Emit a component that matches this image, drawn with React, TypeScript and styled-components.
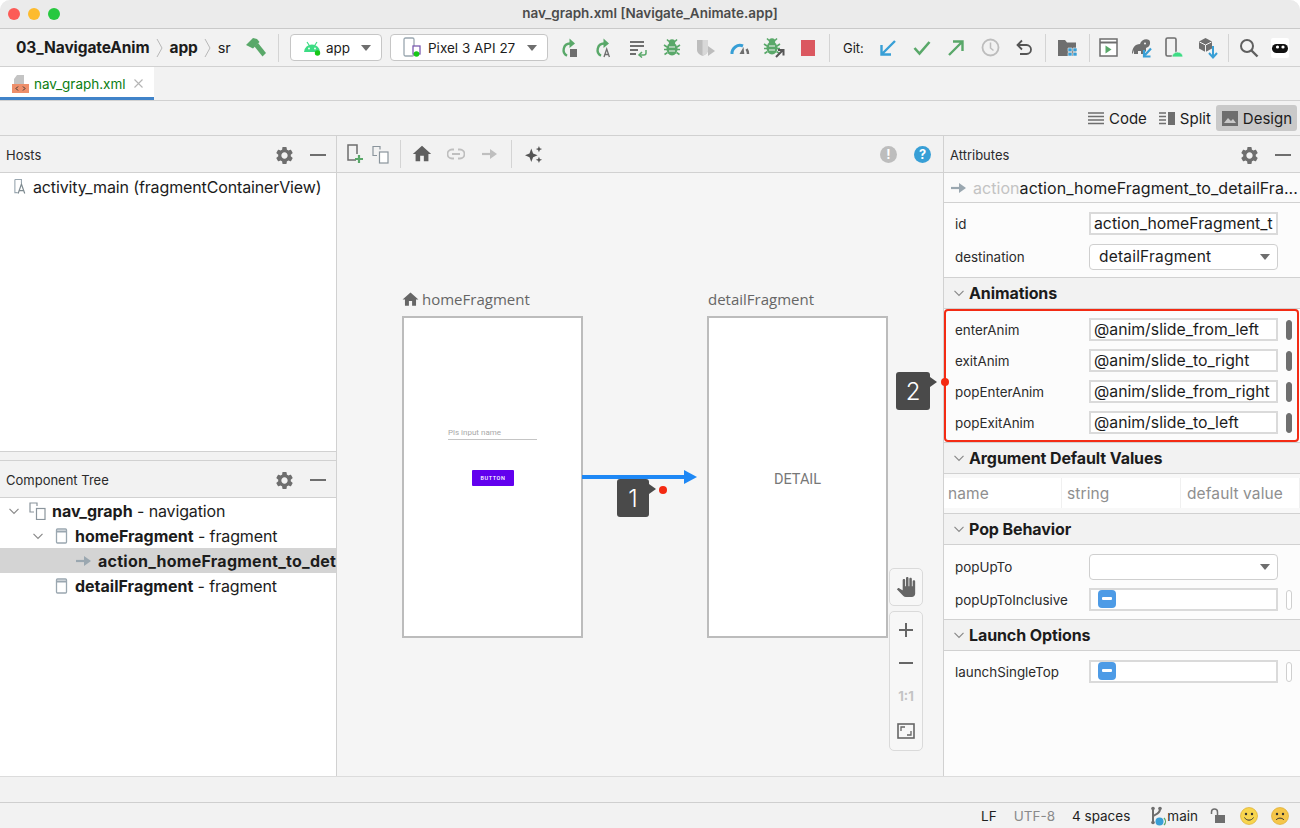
import React from 'react'
import styled, { createGlobalStyle } from 'styled-components'
import { MdSettings, MdHome, MdPanTool } from 'react-icons/md'

const GlobalStyle = createGlobalStyle`
  html, body { margin: 0; padding: 0; background: #fff; }
  body { font-family: Inter, "Liberation Sans", sans-serif; color: #1c1c1c; }
  * { box-sizing: border-box; }
`

const Window = styled.div`
  position: relative;
  width: 1300px;
  height: 828px;
  display: flex;
  flex-direction: column;
  overflow: hidden;
  background: #f2f2f2;
  border-radius: 10px 10px 0 0;
`

const TitleBar = styled.div`
  position: relative;
  height: 29px;
  flex: none;
  display: flex;
  align-items: center;
  justify-content: center;
  padding-bottom: 2px;
  background: #ebebeb;
  border-bottom: 1px solid #c9c9c9;
  font-size: 13.5px;
  font-weight: 600;
  color: #4b4b4b;
`

const Lights = styled.div`
  position: absolute;
  left: 8px;
  top: 8px;
  display: flex;
  gap: 8px;
`

const Light = styled.span<{ $c: string }>`
  width: 12px;
  height: 12px;
  border-radius: 50%;
  background: ${p => p.$c};
`

const Toolbar = styled.div`
  height: 38px;
  flex: none;
  display: flex;
  align-items: center;
  padding-left: 16px;
  background: #f2f2f2;
  border-bottom: 1px solid #d1d1d1;
`

const Crumbs = styled.div`
  width: 224px;
  display: flex;
  align-items: center;
  font-size: 15.5px;
  font-weight: 700;
  letter-spacing: -0.1px;
`

const CrumbGap = styled.svg`
  margin: 0 7px 0 6px;
  flex: none;
`

const CrumbLast = styled.span`
  font-weight: 400;
  font-size: 14.5px;
`

const Slot = styled.div<{ $w?: number; $ml?: number }>`
  width: ${p => p.$w || 34}px;
  margin-left: ${p => p.$ml || 0}px;
  height: 24px;
  flex: none;
  display: flex;
  align-items: center;
  justify-content: center;
`

const Sep = styled.div<{ $ml: number; $mr?: number }>`
  width: 1px;
  height: 28px;
  flex: none;
  margin-left: ${p => p.$ml}px;
  margin-right: ${p => p.$mr || 0}px;
  background: #d4d4d4;
`

const RunPicker = styled.div<{ $w: number; $ml?: number }>`
  width: ${p => p.$w}px;
  height: 27px;
  flex: none;
  margin-left: ${p => p.$ml || 0}px;
  display: flex;
  align-items: center;
  padding: 0 10px 0 12px;
  gap: 5px;
  background: #fff;
  border: 1px solid #c6c6c6;
  border-radius: 4px;
  font-size: 13.5px;
  white-space: nowrap;
`

const Caret = styled.span`
  margin-left: auto;
  width: 0;
  height: 0;
  border-left: 5.5px solid transparent;
  border-right: 5.5px solid transparent;
  border-top: 6px solid #6e6e6e;
`

const GitLabel = styled.span`
  width: 22px;
  margin-left: 13px;
  flex: none;
  font-size: 13px;
`

const TabBar = styled.div`
  height: 34px;
  flex: none;
  display: flex;
  background: #f2f2f2;
  border-bottom: 1px solid #d1d1d1;
`

const Tab = styled.div`
  width: 154px;
  height: 33px;
  display: flex;
  align-items: center;
  padding: 3px 0 0 12px;
  gap: 5px;
  background: #fff;
  border-bottom: 3px solid #4083c9;
  font-size: 13.5px;
  color: #0b7e12;
`

const TabClose = styled.svg`
  margin-left: 2px;
`

const ViewBar = styled.div`
  height: 35px;
  flex: none;
  display: flex;
  align-items: center;
  justify-content: flex-end;
  padding-right: 3px;
  background: #f2f2f2;
  border-bottom: 1px solid #d1d1d1;
`

const ViewMode = styled.div<{ $active?: boolean }>`
  height: 26px;
  display: flex;
  align-items: center;
  gap: 5px;
  padding: 0 5px 0 6px;
  margin-left: ${p => (p.$active ? 0 : 1)}px;
  border-radius: 3px;
  background: ${p => (p.$active ? '#c9c9c9' : 'transparent')};
  font-size: 15px;
`

const Main = styled.div`
  height: 641px;
  flex: none;
  display: flex;
  border-bottom: 1px solid #dcdcdc;
`

const LeftCol = styled.div`
  width: 337px;
  flex: none;
  display: flex;
  flex-direction: column;
  border-right: 1px solid #d1d1d1;
`

const PanelHead = styled.div<{ $pr?: number }>`
  height: 37px;
  flex: none;
  display: flex;
  align-items: center;
  padding: 2px ${p => p.$pr || 9}px 0 6px;
  background: #f2f2f2;
  border-bottom: 1px solid #d1d1d1;
  font-size: 13px;
  color: #2b2b2b;
`

const HeadTools = styled.div`
  margin-left: auto;
  display: flex;
  align-items: center;
  gap: 15px;
  color: #6e6e6e;
`

const Minus = styled.span`
  width: 16px;
  height: 2px;
  background: #6e6e6e;
`

const HostList = styled.div`
  height: 279px;
  flex: none;
  background: #fff;
  border-bottom: 1px solid #d1d1d1;
  padding-top: 1px;
`

const Splitter = styled.div`
  height: 9px;
  flex: none;
  background: #f2f2f2;
  border-bottom: 1px solid #d1d1d1;
`

const Tree = styled.div`
  flex: 1;
  background: #fff;
  overflow: hidden;
`

const TreeRow = styled.div<{ $indent: number; $selected?: boolean }>`
  height: 25px;
  display: flex;
  align-items: center;
  gap: 5px;
  padding-left: ${p => p.$indent}px;
  background: ${p => (p.$selected ? '#d4d4d4' : 'transparent')};
  font-size: 16px;
  letter-spacing: -0.13px;
  white-space: nowrap;
`

const TreeToggle = styled.span`
  display: flex;
  margin-right: 4px;
`

const ArrowSlot = styled.span`
  width: 17px;
  flex: none;
  display: flex;
`

const Bold = styled.b`
  font-weight: 700;
  letter-spacing: 0;
`

const ActionName = styled(Bold)`
  letter-spacing: 0.25px;
`

const Canvas = styled.div`
  width: 607px;
  flex: none;
  display: flex;
  flex-direction: column;
  background: #f5f5f5;
  border-right: 1px solid #d1d1d1;
`

const CanvasTools = styled.div`
  height: 37px;
  flex: none;
  display: flex;
  align-items: center;
  padding: 0 12px 0 9px;
  background: #f2f2f2;
  border-bottom: 1px solid #d1d1d1;
`

const ToolRight = styled.div`
  margin-left: auto;
  display: flex;
  gap: 17px;
`

const Graph = styled.div`
  position: relative;
  flex: 1;
`

const NodeLabel = styled.div<{ $x: number }>`
  position: absolute;
  left: ${p => p.$x}px;
  top: 116px;
  display: flex;
  align-items: center;
  gap: 2px;
  font-size: 15px;
  font-family: "Open Sans", Inter, sans-serif;
  color: #666;
`

const Node = styled.div<{ $x: number }>`
  position: absolute;
  left: ${p => p.$x}px;
  top: 143px;
  width: 181px;
  height: 322px;
  background: #fff;
  border: 2px solid #bcbcbc;
`

const NameField = styled.div`
  position: absolute;
  left: 44px;
  top: 110px;
  width: 89px;
  height: 12px;
  border-bottom: 1px solid #c5c5c5;
  font-size: 8px;
  line-height: 10px;
  color: #a8a8a8;
  font-family: Roboto, sans-serif;
`

const FakeButton = styled.div`
  position: absolute;
  left: 68px;
  top: 152px;
  width: 42px;
  height: 16px;
  display: flex;
  align-items: center;
  justify-content: center;
  background: #6200ee;
  border-radius: 1px;
  font-size: 5.5px;
  font-weight: 500;
  letter-spacing: 0.6px;
  color: #fff;
  font-family: Roboto, sans-serif;
`

const DetailText = styled.div`
  position: absolute;
  left: 0;
  right: 0;
  top: 153px;
  text-align: center;
  font-size: 14.5px;
  color: #777;
  font-family: Roboto, sans-serif;
`

const Edge = styled.svg`
  position: absolute;
  left: 245px;
  top: 296px;
`

const ToolCard = styled.div<{ $top: number; $h: number }>`
  position: absolute;
  left: 552px;
  top: ${p => p.$top}px;
  width: 34px;
  height: ${p => p.$h}px;
  display: flex;
  flex-direction: column;
  align-items: center;
  justify-content: space-around;
  padding: 2px 0;
  background: #f7f7f7;
  border: 1px solid #dadada;
  border-radius: 5px;
  color: #666;
`

const OneToOne = styled.span`
  font-size: 13px;
  font-weight: 700;
  color: #c4c4c4;
`

const Attrs = styled.div`
  flex: 1;
  display: flex;
  flex-direction: column;
  background: #fcfcfc;
  min-width: 0;
`

const ActionRow = styled.div`
  height: 30px;
  flex: none;
  display: flex;
  align-items: center;
  padding: 1px 0 0 7px;
  background: #fafafa;
  border-bottom: 1px solid #d1d1d1;
  font-size: 16px;
  letter-spacing: 0.05px;
  white-space: nowrap;
`

const ActionGhost = styled.span`
  margin-left: 6px;
  color: #c3c3c3;
`

const SectionHead = styled.div`
  height: 32px;
  flex: none;
  display: flex;
  align-items: center;
  gap: 4px;
  padding-left: 9px;
  background: #f2f2f2;
  border-top: 1px solid #d1d1d1;
  border-bottom: 1px solid #d1d1d1;
  font-size: 16px;
  font-weight: 700;
  letter-spacing: -0.1px;
`

const SectionBody = styled.div<{ $top: number; $bottom: number }>`
  flex: none;
  padding: ${p => p.$top}px 0 ${p => p.$bottom}px;
`

const AttrRow = styled.div<{ $h: number }>`
  height: ${p => p.$h}px;
  display: flex;
  align-items: center;
  padding-left: 11px;
`

const AttrLabel = styled.span`
  width: 134px;
  flex: none;
  font-size: 13.4px;
  color: #2b2b2b;
`

const Field = styled.div`
  width: 189px;
  height: 23px;
  flex: none;
  display: flex;
  align-items: center;
  padding-left: 3px;
  background: #fff;
  border: 2px solid #dadada;
  font-size: 15.8px;
  white-space: nowrap;
  overflow: hidden;
`

const Check = styled.span`
  position: relative;
  width: 18px;
  height: 18px;
  margin: 0 0 2px 4px;
  border-radius: 4px;
  background: #4d9be6;
  &::after {
    content: '';
    position: absolute;
    left: 4px;
    top: 7px;
    width: 10px;
    height: 3px;
    border-radius: 1px;
    background: #fff;
  }
`

const Select = styled.div`
  width: 189px;
  height: 26px;
  flex: none;
  display: flex;
  align-items: center;
  padding: 0 7px 0 9px;
  background: #fff;
  border: 1px solid #cfcfcf;
  border-radius: 4px;
  font-size: 15.5px;
  letter-spacing: 0.2px;
`

const Grip = styled.span<{ $empty?: boolean }>`
  width: 6px;
  height: 20px;
  margin-left: 8px;
  flex: none;
  border-radius: 3px;
  background: ${p => (p.$empty ? '#fff' : '#6e6e6e')};
  border: 1px solid ${p => (p.$empty ? '#cfcfcf' : '#6e6e6e')};
`

const ArgTable = styled.div`
  height: 39px;
  flex: none;
  display: grid;
  grid-template-columns: 118px 119px 1fr;
  padding: 4px 0 5px;
  background: #f8f8f8;
`

const ArgCell = styled.div`
  display: flex;
  align-items: center;
  padding-left: 4px;
  background: #fff;
  border-right: 1px solid #f0f0f0;
  font-size: 15.5px;
  letter-spacing: 0.1px;
  color: #8f8f8f;
  &:nth-child(n + 2) { padding-left: 5px; }
  &:nth-child(3) { padding-left: 6px; }
`

const BottomGap = styled.div`
  height: 26px;
  flex: none;
  background: #f2f2f2;
  border-bottom: 1px solid #cfcfcf;
`

const StatusBar = styled.div`
  flex: 1;
  display: flex;
  align-items: center;
  padding-right: 11px;
  background: #f2f2f2;
  font-size: 13.5px;
`

const StatusItem = styled.span<{ $ml: number; $muted?: boolean }>`
  margin-left: ${p => p.$ml}px;
  color: ${p => (p.$muted ? '#8a8a8a' : '#1f1f1f')};
  display: flex;
  align-items: center;
`

const StatusStart = styled.span`
  margin-left: auto;
`

const Badge = styled.div<{ $x: number; $y: number; $w: number; $h: number }>`
  position: absolute;
  left: ${p => p.$x}px;
  top: ${p => p.$y}px;
  width: ${p => p.$w}px;
  height: ${p => p.$h}px;
  display: flex;
  align-items: center;
  justify-content: center;
  background: #4a4a4a;
  border-radius: 3px;
  font-size: 24px;
  font-weight: 300;
  color: #fff;
  &::after {
    content: '';
    position: absolute;
    left: 100%;
    top: 5px;
    border-left: 7px solid #4a4a4a;
    border-top: 5.5px solid transparent;
    border-bottom: 5.5px solid transparent;
  }
`

const RedDot = styled.span<{ $x: number; $y: number }>`
  position: absolute;
  left: ${p => p.$x}px;
  top: ${p => p.$y}px;
  width: 8px;
  height: 8px;
  border-radius: 50%;
  background: #f42a12;
`

const RedFrame = styled.div`
  position: absolute;
  left: 944px;
  top: 309px;
  width: 355px;
  height: 133px;
  border: 2px solid #f32b14;
  border-radius: 4px;
`

/* icons */
const G = '#59a869'
const GR = '#6e6e6e'
const BL = '#389fd6'

const Chevron = ({ c = '#8a8a8a' }: { c?: string }) => (
  <svg width="12" height="12" viewBox="0 0 12 12"><path d="M1.5 3.8 6 8.3l4.5-4.500" fill="none" stroke={c} strokeWidth="1.2" /></svg>
)

const Gear = () => <MdSettings size={21} color="#6e6e6e" />

const Hammer = () => (
  <svg width="22" height="22" viewBox="0 0 22 22">
    <path d="M1 8 8 1l4 1 2.500 3-6.500 6.500z" fill={G} />
    <path d="M9.500 9.500 13 6l8 10-3.500 3.500z" fill={G} />
  </svg>
)

const Droid = () => (
  <svg width="18" height="16" viewBox="0 0 18 16">
    <path d="M1 12a8 7.500 0 0 1 16 0z" fill="#3ddc84" />
    <path d="m4 2 2 3M14 2l-2 3" stroke="#3ddc84" strokeWidth="1.200" />
    <circle cx="6" cy="8.500" r=".9" fill="#fff" />
    <circle cx="12" cy="8.500" r=".9" fill="#fff" />
    <circle cx="14.500" cy="13" r="2.700" fill="#17c717" />
  </svg>
)

const Phone = () => (
  <svg width="20" height="22" viewBox="0 0 20 22">
    <rect x="1" y="1" width="10" height="18" rx="1.500" fill="#fff" stroke="#9aa7b0" strokeWidth="1.300" />
    <rect x="10" y="9" width="7" height="8" fill="#fff" stroke="#7b5bb0" strokeWidth="1.300" />
    <circle cx="13.500" cy="17" r="2.800" fill="#17c717" />
  </svg>
)

const Rerun = ({ letter }: { letter?: boolean }) => (
  <svg width="20" height="22" viewBox="0 0 20 22">
    <path d="M10 6.500a6.500 6.500 0 0 0-3 12.200" fill="none" stroke={G} strokeWidth="2.400" />
    <path d="M9.500 1.500 15 6.500l-5.500 4.500z" fill={G} />
    {letter
      ? <path d="m10 20 2.700-8 2.700 8m-4.500-2.500h3.600" fill="none" stroke={GR} strokeWidth="1.300" />
      : <rect x="10" y="12" width="7" height="8" fill={GR} />}
  </svg>
)

const SyncLines = () => (
  <svg width="20" height="20" viewBox="0 0 20 20">
    <path d="M2 4h14M2 8h14M2 12h8M2 16h6" stroke={GR} strokeWidth="2" />
    <path d="M18 12v3a2 2 0 0 1-2 2h-4" fill="none" stroke={G} strokeWidth="1.500" />
    <path d="m14 14-3 3 3 2.500" fill="none" stroke={G} strokeWidth="1.500" />
  </svg>
)

const BugBody = ({ c }: { c: string }) => (
  <>
    <ellipse cx="9" cy="11" rx="5.500" ry="6.500" fill={c} />
    <circle cx="9" cy="4.500" r="3.200" fill={c} />
    <path d="M1 7l3 2M17 7l-3 2M1 11.500h3M17 11.500h-3M1.500 16.500l3-2M16.500 16.500l-3-2M4 1.500l2 2M14 1.500l-2 2" stroke={c} strokeWidth="1.600" />
    <path d="M6 9h6M6 13h6" stroke="#f2f2f2" strokeWidth="1.100" />
  </>
)

const Bug = () => <svg width="18" height="19" viewBox="0 0 18 19"><BugBody c={G} /></svg>

const AttachBug = () => (
  <svg width="22" height="22" viewBox="0 0 22 22">
    <BugBody c={G} />
    <path d="m13 20 7-7m-5 0h5.500v5.500" fill="none" stroke="#555" strokeWidth="2" />
  </svg>
)

const Shield = () => (
  <svg width="22" height="22" viewBox="0 0 22 22">
    <path d="M2 3h11v10c0 3-3 5-5.500 6C5 18 2 16 2 13z" fill="#bdbdbd" />
    <path d="M7.500 3H13v10c0 3-3 5-5.500 6z" fill="#d8d8d8" />
    <path d="m13 9 7 5-7 5z" fill="#bdbdbd" />
  </svg>
)

const Gauge = () => (
  <svg width="20" height="18" viewBox="0 0 20 18">
    <path d="M2 15a8 8 0 0 1 11-8" fill="none" stroke={BL} strokeWidth="3" />
    <path d="M18 15a8 8 0 0 0-1.500-5" fill="none" stroke={GR} strokeWidth="2.500" />
    <path d="m9.500 15 4-7 .8 7z" fill={GR} />
  </svg>
)

const Stop = () => <svg width="14" height="16" viewBox="0 0 14 16"><rect width="14" height="16" fill="#db5860" /></svg>

const ArrowIcon = ({ c, up }: { c: string; up?: boolean }) => (
  <svg width="18" height="18" viewBox="0 0 18 18">
    {up
      ? <path d="M2 16 15 3M6 2.500h9.500V12" fill="none" stroke={c} strokeWidth="2.400" />
      : <path d="M16 2 3 15M2.500 6v9.500H12" fill="none" stroke={c} strokeWidth="2.400" />}
  </svg>
)

const CheckMark = () => (
  <svg width="18" height="16" viewBox="0 0 18 16"><path d="m1.500 8 5 5.500L16.500 2" fill="none" stroke={G} strokeWidth="2.600" /></svg>
)

const Clock = () => (
  <svg width="19" height="19" viewBox="0 0 19 19">
    <circle cx="9.500" cy="9.500" r="8" fill="none" stroke="#bdbdbd" strokeWidth="1.800" />
    <path d="M9.500 4.500v5.500l3 2.500" fill="none" stroke="#bdbdbd" strokeWidth="1.500" />
  </svg>
)

const Undo = () => (
  <svg width="18" height="18" viewBox="0 0 18 18">
    <path d="M3 6h8.500a4.500 4.500 0 0 1 0 9H5" fill="none" stroke="#555" strokeWidth="1.800" />
    <path d="M7 1.500 2.500 6 7 10.500" fill="none" stroke="#555" strokeWidth="1.800" />
  </svg>
)

const FolderGrid = () => (
  <svg width="20" height="18" viewBox="0 0 20 18">
    <path d="M0 1h7l2 2.500h9V17H0z" fill={GR} />
    <path d="M10 9h4v3.500h-4zM15 9h4v3.500h-4zM15 13.500h4V17h-4zM10 13.500h4V17h-4z" fill={BL} stroke="#f2f2f2" strokeWidth=".6" />
  </svg>
)

const TermPlay = () => (
  <svg width="19" height="19" viewBox="0 0 19 19">
    <rect x="1" y="1" width="17" height="17" fill="#fff" stroke={GR} strokeWidth="1.500" />
    <path d="M1 4.500h17" stroke={GR} strokeWidth="2" />
    <path d="m6.500 7.500 6 4-6 4z" fill={G} />
  </svg>
)

const Elephant = () => (
  <svg width="22" height="22" viewBox="0 0 22 22">
    <path d="M1 17c0-6 3-10 8-10 1-4 6-6 9-4 2 2 1 6-1 7l-2 1v3l-3 3h-2v-3H7v3H3v-4l-1 3z" fill={GR} />
    <circle cx="14" cy="6.500" r="1" fill="#f2f2f2" />
    <path d="M20 11.500 14 18m-1-5v6.500h6.500" fill="none" stroke={BL} strokeWidth="2.200" />
  </svg>
)

const PhoneDroid = () => (
  <svg width="20" height="22" viewBox="0 0 20 22">
    <rect x="1" y="1" width="10" height="18" rx="1.500" fill="none" stroke={GR} strokeWidth="1.600" />
    <path d="M7 20a5.500 5 0 0 1 11 0z" fill="#3ddc84" stroke="#f2f2f2" strokeWidth=".8" />
  </svg>
)

const PackageDown = () => (
  <svg width="20" height="22" viewBox="0 0 20 22">
    <path d="m7.500 1 6.500 3.500v7L7.500 15 1 11.500v-7z" fill={GR} />
    <path d="m1.500 5 6 3 6-3M7.500 8v7" fill="none" stroke="#f2f2f2" strokeWidth="1" />
    <path d="M15 9v11m-4-4 4 4.500 4-4.500" fill="none" stroke={BL} strokeWidth="2" />
  </svg>
)

const Search = () => (
  <svg width="20" height="20" viewBox="0 0 20 20">
    <circle cx="8" cy="8" r="6" fill="none" stroke="#5f5f5f" strokeWidth="2" />
    <path d="m12.500 12.500 6 6" stroke="#5f5f5f" strokeWidth="2.400" />
  </svg>
)

const Ninja = () => (
  <svg width="18" height="20" viewBox="0 0 18 20">
    <rect width="18" height="20" rx="2" fill="#fff" />
    <rect x="1" y="6" width="16" height="9" rx="4.500" fill="#111" />
    <circle cx="6.500" cy="9" r="1.600" fill="#fff" />
    <circle cx="12" cy="9" r="1.600" fill="#fff" />
  </svg>
)

const XmlFile = () => (
  <svg width="17" height="20" viewBox="0 0 17 20">
    <path d="M5 1h7v10H2V5z" fill="#c4c4c4" />
    <rect x="0" y="10" width="18" height="9" fill="#ee8f6b" />
    <path d="M6 12.500 4 14.500l2 2M11 12.500l2 2-2 2" fill="none" stroke="#333" strokeWidth="1" />
  </svg>
)

const Cross = () => (
  <TabClose width="11" height="11" viewBox="0 0 11 11">
    <path d="m1.500 1.500 8 8m0-8-8 8" stroke="#b5b5b5" strokeWidth="1.100" />
  </TabClose>
)

const CodeLines = () => (
  <svg width="16" height="15" viewBox="0 0 16 15"><path d="M0 2h16M0 5.500h16M0 9h16M0 12.500h16" stroke="#6e6e6e" strokeWidth="1.500" /></svg>
)

const SplitLines = () => (
  <svg width="16" height="15" viewBox="0 0 16 15">
    <path d="M0 2h7M0 5.500h7M0 9h7M0 12.500h7" stroke="#6e6e6e" strokeWidth="1.500" />
    <rect x="9" y="1" width="7" height="13" fill="#6e6e6e" />
  </svg>
)

const ImageIcon = () => (
  <svg width="16" height="15" viewBox="0 0 16 15">
    <rect width="16" height="15" fill="#6e6e6e" />
    <path d="m2 12 4-5 3 3 2-2 3 4z" fill="#c9c9c9" />
  </svg>
)

const AddDest = () => (
  <svg width="18" height="20" viewBox="0 0 18 20">
    <path d="M10 16H2V1h9v9" fill="none" stroke="#6e6e6e" strokeWidth="1.500" />
    <path d="M13 11v8M9 15h8" stroke={G} strokeWidth="2.200" />
  </svg>
)

const Copies = ({ s = 18 }: { s?: number }) => (
  <svg width={s} height={s} viewBox="0 0 18 18">
    <path d="M5 10H1V1h7v3" fill="none" stroke="#8a949c" strokeWidth="1.200" />
    <rect x="7.500" y="6.500" width="8.500" height="11" fill="#fff" stroke="#8a949c" strokeWidth="1.200" />
  </svg>
)

const LinkIcon = () => (
  <svg width="18" height="12" viewBox="0 0 18 12">
    <path d="M7 1.500H5a4.500 4.500 0 0 0 0 9h2M11 1.500h2a4.500 4.500 0 0 1 0 9h-2M5 6h8" fill="none" stroke="#bfbfbf" strokeWidth="1.800" />
  </svg>
)

const SmallArrow = ({ c = '#bfbfbf', w = 16 }: { c?: string; w?: number }) => (
  <svg width={w} height="12" viewBox="0 0 16 12"><path d="M0 6h9" stroke={c} strokeWidth="2.200" /><path d="m8 1 7 5-7 5z" fill={c} /></svg>
)

const Sparkles = () => (
  <svg width="18" height="18" viewBox="0 0 20 20" fill="#555">
    <path d="M7 4 9 9.500l5 2-5 2L7 19l-2-5.500-5-2 5-2zM15.500 1l1 2.500L19 4.500l-2.500 1-1 2.500-1-2.500-2.500-1 2.500-1zM15.500 13l1 2.500 2.500 1-2.500 1-1 2.500-1-2.500-2.500-1 2.500-1z" />
  </svg>
)

const RoundMark = ({ c, t }: { c: string; t: string }) => (
  <svg width="17" height="17" viewBox="0 0 16 16">
    <circle cx="8" cy="8" r="8" fill={c} />
    <text x="8" y="12.500" textAnchor="middle" fontSize="12" fontWeight="700" fill="#fff" fontFamily="Inter, sans-serif">{t}</text>
  </svg>
)

const HostIcon = () => (
  <svg width="15" height="17" viewBox="0 0 16 17">
    <path d="M2 1h7v4M2 1v14h3" fill="none" stroke="#9aa7b0" strokeWidth="1.200" />
    <path d="m5.500 16 3.500-10 3.500 10M7 13h5" fill="none" stroke="#7f8b91" strokeWidth="1.300" />
  </svg>
)

const FragIcon = () => (
  <svg width="17" height="16" viewBox="0 0 17 16">
    <rect x="3.500" y="1" width="10" height="14" rx="1" fill="#fff" stroke="#9aa7b0" strokeWidth="1.300" />
    <path d="M3.500 3.500h10" stroke="#9aa7b0" strokeWidth="2" />
  </svg>
)

const FitIcon = () => (
  <svg width="18" height="16" viewBox="0 0 18 16">
    <rect x="1" y="1" width="16" height="14" fill="none" stroke="#666" strokeWidth="1.600" />
    <path d="M4 8V4h4M14 8v4h-4" fill="none" stroke="#666" strokeWidth="1.300" />
  </svg>
)

const BranchIcon = () => (
  <svg width="17" height="20" viewBox="0 0 17 20">
    <path d="M3 2v14M3 11c0-3 7-2 7-8" fill="none" stroke="#6e6e6e" strokeWidth="2" />
    <circle cx="3" cy="2.500" r="1.800" fill="#6e6e6e" />
    <circle cx="10" cy="2.500" r="1.800" fill="#6e6e6e" />
    <circle cx="3" cy="16.500" r="1.800" fill="#6e6e6e" />
    <path d="M14 12a5 5 0 0 1 0 7" fill="none" stroke="#59a869" strokeWidth="1.300" />
    <circle cx="9.500" cy="15.500" r="4" fill="#389fd6" />
  </svg>
)

const Lock = () => (
  <svg width="16" height="16" viewBox="0 0 16 16">
    <path d="M1.500 6V4a3 3 0 0 1 6 0v3" fill="none" stroke="#6e6e6e" strokeWidth="1.500" />
    <rect x="5" y="7" width="10" height="8" fill="#6e6e6e" />
  </svg>
)

const Face = ({ sad }: { sad?: boolean }) => (
  <svg width="18" height="18" viewBox="0 0 18 18">
    <circle cx="9" cy="9" r="8.500" fill={sad ? '#f5c64a' : '#f7d54e'} stroke="#d9a520" strokeWidth=".6" />
    <circle cx="6" cy="7" r="1.200" fill="#333" />
    <circle cx="12" cy="7" r="1.200" fill="#333" />
    <path d={sad ? 'M5 13c2-2.500 6-2.500 8 0' : 'M4.500 10.500c2 3.500 7 3.500 9 0'} fill="none" stroke="#333" strokeWidth="1" />
  </svg>
)

const PanelTools = () => (
  <HeadTools>
    <Gear />
    <Minus />
  </HeadTools>
)

const animRows = [
  ['enterAnim', '@anim/slide_from_left'],
  ['exitAnim', '@anim/slide_to_right'],
  ['popEnterAnim', '@anim/slide_from_right'],
  ['popExitAnim', '@anim/slide_to_left'],
]

const App = () => (
  <Window>
    <GlobalStyle />
    <TitleBar>
      <Lights>
        <Light $c="#fc5b57" />
        <Light $c="#fdbb2e" />
        <Light $c="#27c83f" />
      </Lights>
      nav_graph.xml [Navigate_Animate.app]
    </TitleBar>

    <Toolbar>
      <Crumbs>
        03_NavigateAnim
        <CrumbGap width="7" height="20" viewBox="0 0 7 20"><path d="m1 1 5 9-5 9" fill="none" stroke="#b8b8b8" /></CrumbGap>
        app
        <CrumbGap width="7" height="20" viewBox="0 0 7 20"><path d="m1 1 5 9-5 9" fill="none" stroke="#b8b8b8" /></CrumbGap>
        <CrumbLast>sr</CrumbLast>
      </Crumbs>
      <Slot $w={32}><Hammer /></Slot>
      <Sep $ml={6} $mr={11} />
      <RunPicker $w={92}><Droid />app<Caret /></RunPicker>
      <RunPicker $w={158} $ml={8}><Phone />Pixel 3 API 27<Caret /></RunPicker>
      <Slot $ml={5}><Rerun /></Slot>
      <Slot><Rerun letter /></Slot>
      <Slot><SyncLines /></Slot>
      <Slot><Bug /></Slot>
      <Slot><Shield /></Slot>
      <Slot><Gauge /></Slot>
      <Slot><AttachBug /></Slot>
      <Slot><Stop /></Slot>
      <Sep $ml={4} />
      <GitLabel>Git:</GitLabel>
      <Slot $ml={6}><ArrowIcon c={BL} /></Slot>
      <Slot><CheckMark /></Slot>
      <Slot><ArrowIcon c={G} up /></Slot>
      <Slot><Clock /></Slot>
      <Slot><Undo /></Slot>
      <Sep $ml={4} />
      <Slot $ml={5}><FolderGrid /></Slot>
      <Sep $ml={4} />
      <Slot $w={33} $ml={2}><TermPlay /></Slot>
      <Slot $w={33}><Elephant /></Slot>
      <Slot $w={33}><PhoneDroid /></Slot>
      <Slot $w={33}><PackageDown /></Slot>
      <Sep $ml={4} />
      <Slot $w={33} $ml={3}><Search /></Slot>
      <Slot $w={30}><Ninja /></Slot>
    </Toolbar>

    <TabBar>
      <Tab><XmlFile />nav_graph.xml<Cross /></Tab>
    </TabBar>

    <ViewBar>
      <ViewMode><CodeLines />Code</ViewMode>
      <ViewMode><SplitLines />Split</ViewMode>
      <ViewMode $active><ImageIcon />Design</ViewMode>
    </ViewBar>

    <Main>
      <LeftCol>
        <PanelHead $pr={10}>Hosts<PanelTools /></PanelHead>
        <HostList>
          <TreeRow $indent={13}><HostIcon />activity_main (fragmentContainerView)</TreeRow>
        </HostList>
        <Splitter />
        <PanelHead $pr={10}>Component Tree<PanelTools /></PanelHead>
        <Tree>
          <TreeRow $indent={8}>
            <TreeToggle><Chevron /></TreeToggle><Copies /><span><Bold>nav_graph</Bold> - navigation</span>
          </TreeRow>
          <TreeRow $indent={32}>
            <TreeToggle><Chevron /></TreeToggle><FragIcon /><span><Bold>homeFragment</Bold> - fragment</span>
          </TreeRow>
          <TreeRow $indent={76} $selected>
            <ArrowSlot><SmallArrow c="#9aa7b0" /></ArrowSlot><ActionName>action_homeFragment_to_detailFragment</ActionName>
          </TreeRow>
          <TreeRow $indent={53}>
            <FragIcon /><span><Bold>detailFragment</Bold> - fragment</span>
          </TreeRow>
        </Tree>
      </LeftCol>

      <Canvas>
        <CanvasTools>
          <Slot $w={18}><AddDest /></Slot>
          <Slot $w={18} $ml={8}><Copies s={19} /></Slot>
          <Sep $ml={10} />
          <Slot $ml={4}><MdHome size={22} color="#5f5f5f" /></Slot>
          <Slot><LinkIcon /></Slot>
          <Slot><SmallArrow /></Slot>
          <Sep $ml={4} />
          <Slot $ml={5}><Sparkles /></Slot>
          <ToolRight>
            <RoundMark c="#bdbdbd" t="!" />
            <RoundMark c="#389fd6" t="?" />
          </ToolRight>
        </CanvasTools>
        <Graph>
          <NodeLabel $x={64}><MdHome size={19} color="#666" />homeFragment</NodeLabel>
          <Node $x={65}>
            <NameField>Pls input name</NameField>
            <FakeButton>BUTTON</FakeButton>
          </Node>
          <NodeLabel $x={371}>detailFragment</NodeLabel>
          <Node $x={370}>
            <DetailText>DETAIL</DetailText>
          </Node>
          <Edge width="116" height="16" viewBox="0 0 116 16">
            <path d="M0 8h104" stroke="#1e88f5" strokeWidth="4" />
            <path d="m102 1 13 7-13 7z" fill="#1e88f5" />
          </Edge>
          <ToolCard $top={395} $h={38}><MdPanTool size={20} /></ToolCard>
          <ToolCard $top={438} $h={140}>
            <svg width="14" height="14" viewBox="0 0 14 14"><path d="M7 0v14M0 7h14" stroke="#666" strokeWidth="2" /></svg>
            <svg width="14" height="14" viewBox="0 0 14 14"><path d="M0 7h14" stroke="#666" strokeWidth="2" /></svg>
            <OneToOne>1:1</OneToOne>
            <FitIcon />
          </ToolCard>
        </Graph>
      </Canvas>

      <Attrs>
        <PanelHead>Attributes<PanelTools /></PanelHead>
        <ActionRow>
          <SmallArrow c="#9aa7b0" />
          <ActionGhost>action</ActionGhost>action_homeFragment_to_detailFra...
        </ActionRow>
        <SectionBody $top={4} $bottom={4}>
          <AttrRow $h={33}><AttrLabel>id</AttrLabel><Field>action_homeFragment_t</Field></AttrRow>
          <AttrRow $h={33}><AttrLabel>destination</AttrLabel><Select>detailFragment<Caret /></Select></AttrRow>
        </SectionBody>
        <SectionHead><Chevron />Animations</SectionHead>
        <SectionBody $top={5} $bottom={4}>
          {animRows.map(([name, value]) => (
            <AttrRow $h={31} key={name}>
              <AttrLabel>{name}</AttrLabel>
              <Field>{value}</Field>
              <Grip />
            </AttrRow>
          ))}
        </SectionBody>
        <SectionHead><Chevron />Argument Default Values</SectionHead>
        <ArgTable>
          <ArgCell>name</ArgCell>
          <ArgCell>string</ArgCell>
          <ArgCell>default value</ArgCell>
        </ArgTable>
        <SectionHead><Chevron />Pop Behavior</SectionHead>
        <SectionBody $top={5} $bottom={3}>
          <AttrRow $h={33}><AttrLabel>popUpTo</AttrLabel><Select><Caret /></Select></AttrRow>
          <AttrRow $h={33}><AttrLabel>popUpToInclusive</AttrLabel><Field><Check /></Field><Grip $empty /></AttrRow>
        </SectionBody>
        <SectionHead><Chevron />Launch Options</SectionHead>
        <SectionBody $top={4} $bottom={0}>
          <AttrRow $h={33}><AttrLabel>launchSingleTop</AttrLabel><Field><Check /></Field><Grip $empty /></AttrRow>
        </SectionBody>
      </Attrs>
    </Main>

    <BottomGap />
    <StatusBar>
      <StatusStart />
      <StatusItem $ml={0}>LF</StatusItem>
      <StatusItem $ml={17} $muted>UTF-8</StatusItem>
      <StatusItem $ml={17}>4 spaces</StatusItem>
      <StatusItem $ml={20}><BranchIcon />main</StatusItem>
      <StatusItem $ml={12}><Lock /></StatusItem>
      <StatusItem $ml={14}><Face /></StatusItem>
      <StatusItem $ml={13}><Face sad /></StatusItem>
    </StatusBar>

    <Badge $x={617} $y={479} $w={32} $h={38}>1</Badge>
    <RedDot $x={659} $y={486} />
    <RedFrame />
    <Badge $x={896} $y={372} $w={34} $h={38}>2</Badge>
    <RedDot $x={941} $y={378} />
  </Window>
)

export default App
